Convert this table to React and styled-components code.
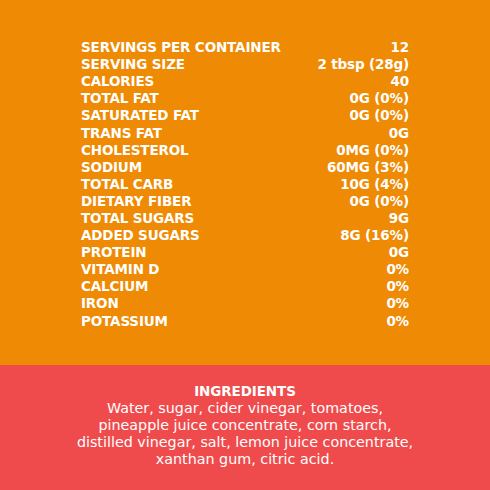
import React from 'react';
import styled, { createGlobalStyle } from 'styled-components';

const GlobalStyle = createGlobalStyle`
  html, body {
    margin: 0;
    padding: 0;
    background: #EF8A04;
  }
`;

const Page = styled.div`
  width: 490px;
  height: 490px;
  display: flex;
  flex-direction: column;
  font-family: "DejaVu Sans", "Open Sans", sans-serif;
  color: #ffffff;
`;

const FactsPanel = styled.div`
  background: #EF8A04;
  height: 365px;
  box-sizing: border-box;
  padding: 39px 81px 0 81px;
`;

const FactRow = styled.div`
  display: flex;
  justify-content: space-between;
  align-items: center;
  height: 17.1px;
  font-size: 13.5px;
  font-weight: 700;
  letter-spacing: -0.15px;
  line-height: 17px;
  white-space: nowrap;
`;

const IngredientsPanel = styled.div`
  flex: 1;
  background: #EF4B4D;
  text-align: center;
  padding-top: 17px;
`;

const IngredientsTitle = styled.div`
  font-size: 13.5px;
  font-weight: 700;
  line-height: 18px;
  letter-spacing: -0.1px;
`;

const IngredientsText = styled.p`
  margin: 0;
  font-size: 14.3px;
  line-height: 17px;
  font-weight: 400;
  white-space: nowrap;
`;

const facts = [
  ['SERVINGS PER CONTAINER', '12'],
  ['SERVING SIZE', '2 tbsp (28g)'],
  ['CALORIES', '40'],
  ['TOTAL FAT', '0G (0%)'],
  ['SATURATED FAT', '0G (0%)'],
  ['TRANS FAT', '0G'],
  ['CHOLESTEROL', '0MG (0%)'],
  ['SODIUM', '60MG (3%)'],
  ['TOTAL CARB', '10G (4%)'],
  ['DIETARY FIBER', '0G (0%)'],
  ['TOTAL SUGARS', '9G'],
  ['ADDED SUGARS', '8G (16%)'],
  ['PROTEIN', '0G'],
  ['VITAMIN D', '0%'],
  ['CALCIUM', '0%'],
  ['IRON', '0%'],
  ['POTASSIUM', '0%'],
];

const App = () => {
  return (
    <Page>
      <GlobalStyle />
      <FactsPanel>
        {facts.map(([label, value]) => (
          <FactRow key={label}>
            <span>{label}</span>
            <span>{value}</span>
          </FactRow>
        ))}
      </FactsPanel>
      <IngredientsPanel>
        <IngredientsTitle>INGREDIENTS</IngredientsTitle>
        <IngredientsText>
          Water, sugar, cider vinegar, tomatoes,<br />
          pineapple juice concentrate, corn starch,<br />
          distilled vinegar, salt, lemon juice concentrate,<br />
          xanthan gum, citric acid.
        </IngredientsText>
      </IngredientsPanel>
    </Page>
  );
};

export default App;
